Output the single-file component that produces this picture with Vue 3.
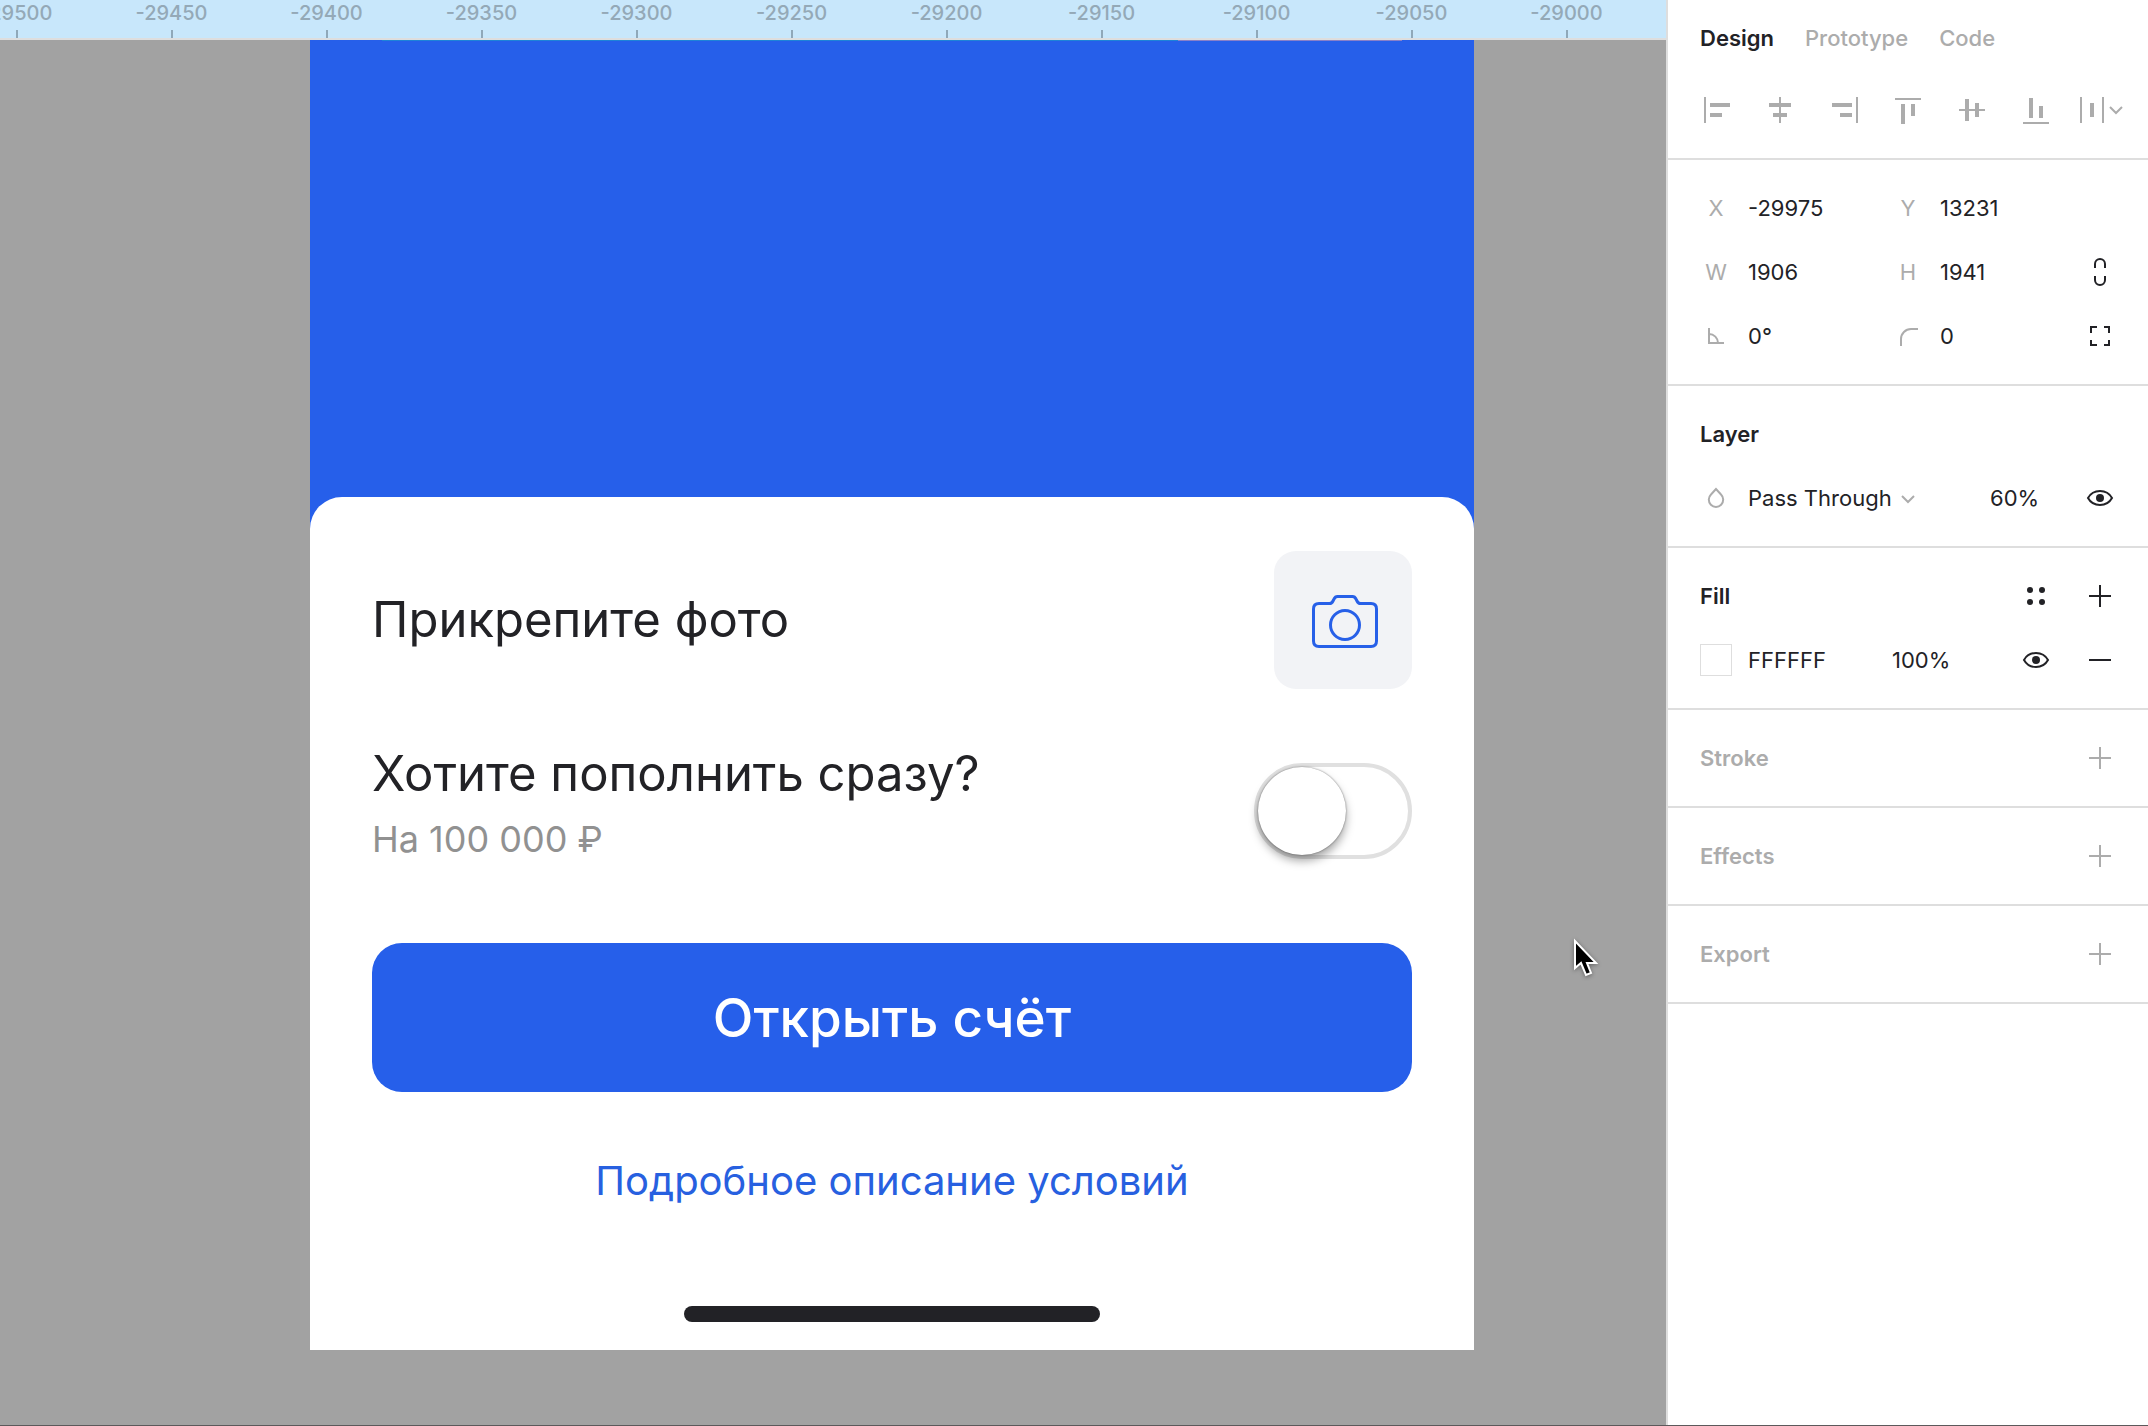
<script setup>
import { ref } from 'vue'

const marks = [-29500, -29450, -29400, -29350, -29300, -29250, -29200, -29150, -29100, -29050, -29000]

const tabs = ['Design', 'Prototype', 'Code']
const activeTab = ref('Design')

const aligns = [
  { name: 'Align left', d: 'M20 19h2v26h-2zM26 25h20v4H26zM26 35h12v4H26z' },
  { name: 'Align horizontal centers', d: 'M31 19h2v26h-2zM21 25h22v4H21zM25 35h14v4H25z' },
  { name: 'Align right', d: 'M44 19h2v26h-2zM20 25h20v4H20zM28 35h12v4H28z' },
  { name: 'Align top', d: 'M19 20h26v2H19zM25 26h4v20h-4zM35 26h4v12h-4z' },
  { name: 'Align vertical centers', d: 'M19 31h26v2H19zM25 21h4v22h-4zM35 25h4v14h-4z' },
  { name: 'Align bottom', d: 'M19 44h26v2H19zM25 20h4v20h-4zM35 28h4v12h-4z' },
]

const frame = ref({ x: '-29975', y: '13231', w: '1906', h: '1941', angle: '0°', radius: '0' })
const blendModes = ['Pass Through', 'Normal', 'Multiply']
const blend = ref('Pass Through')
const opacity = ref('60%')
const fill = ref({ hex: 'FFFFFF', alpha: '100%' })
const emptySections = ['Stroke', 'Effects', 'Export']
const topUp = ref(false)
</script>

<template>
  <div class="editor">
    <main class="workspace">
      <div class="ruler">
        <div class="mark" v-for="mark in marks" :key="mark">{{ mark }}</div>
      </div>
      <div class="canvas">
        <div class="phone">
          <div class="artwork-edge"></div>
          <div class="sheet">
            <div class="line photo-line">
              <h2>Прикрепите фото</h2>
              <button class="camera" aria-label="Прикрепите фото">
                <svg width="66" height="54" viewBox="0 0 66 54" fill="none" stroke="#2760e8" stroke-width="3">
                  <path d="M7 8.500H17.500C19.500 8.500 20.300 7.500 21 6L22 4C22.700 2.500 23.500 1.500 25.500 1.500H40.500C42.500 1.500 43.300 2.500 44 4L45 6C45.700 7.500 46.500 8.500 48.500 8.500H59Q64.500 8.500 64.500 14V46Q64.500 51.500 59 51.500H7Q1.500 51.500 1.500 46V14Q1.500 8.500 7 8.500Z" />
                  <circle cx="33" cy="30" r="14.500" />
                </svg>
              </button>
            </div>
            <div class="line topup-line">
              <label for="topup">
                <span class="question">Хотите пополнить сразу?</span>
                <span class="amount">На 100 000 ₽</span>
              </label>
              <input id="topup" class="switch" type="checkbox" role="switch" v-model="topUp">
            </div>
            <button class="open-btn">Открыть счёт</button>
            <a class="terms" href="#">Подробное описание условий</a>
            <div class="home-bar"></div>
          </div>
        </div>
        <svg class="cursor" width="28" height="40" viewBox="0 0 28 40">
          <path d="M3 3V30L9 25L14 37L19 35L15 25H24Z" fill="#000" stroke="#fff" stroke-width="2" />
        </svg>
      </div>
    </main>

    <aside class="panel">
      <section class="head">
        <nav class="tabs">
          <button v-for="tab in tabs" :key="tab" :class="{ active: tab === activeTab }" @click="activeTab = tab">{{ tab }}</button>
        </nav>
        <div class="aligns">
          <button class="icon-btn muted" v-for="item in aligns" :key="item.name" :aria-label="item.name">
            <svg width="64" height="64" viewBox="0 0 64 64"><path :d="item.d" fill="currentColor" /></svg>
          </button>
          <button class="icon-btn muted" aria-label="Distribute">
            <svg width="64" height="64" viewBox="0 0 64 64">
              <path d="M12 19h2v26h-2zM22 25h4v14h-4zM34 19h2v26h-2z" fill="currentColor" />
              <path d="M42 29l6 6 6-6" fill="none" stroke="currentColor" stroke-width="2" />
            </svg>
          </button>
        </div>
      </section>

      <section>
        <div class="row">
          <div class="field">
            <label for="fx">X</label>
            <input id="fx" v-model="frame.x">
          </div>
          <div class="field">
            <label for="fy">Y</label>
            <input id="fy" v-model="frame.y">
          </div>
        </div>
        <div class="row">
          <div class="field">
            <label for="fw">W</label>
            <input id="fw" v-model="frame.w">
          </div>
          <div class="field">
            <label for="fh">H</label>
            <input id="fh" v-model="frame.h">
          </div>
          <button class="icon-btn" aria-label="Constrain proportions">
            <svg width="64" height="64" viewBox="0 0 64 64" fill="none" stroke="currentColor" stroke-width="2">
              <path d="M27 28V24a5 5 0 0 1 10 0V28M27 36V40a5 5 0 0 0 10 0V36" />
            </svg>
          </button>
        </div>
        <div class="row">
          <div class="field">
            <label for="fa" aria-label="Rotation">
              <svg width="32" height="32" viewBox="0 0 32 32" fill="none" stroke="currentColor" stroke-width="2">
                <path d="M9 8V23H24M9 14a9 9 0 0 1 9 9" />
              </svg>
            </label>
            <input id="fa" v-model="frame.angle">
          </div>
          <div class="field">
            <label for="fr" aria-label="Corner radius">
              <svg width="32" height="32" viewBox="0 0 32 32" fill="none" stroke="currentColor" stroke-width="2">
                <path d="M9 26V19A10 10 0 0 1 19 9H26" />
              </svg>
            </label>
            <input id="fr" v-model="frame.radius">
          </div>
          <button class="icon-btn" aria-label="Independent corners">
            <svg width="64" height="64" viewBox="0 0 64 64" fill="none" stroke="currentColor" stroke-width="2">
              <path d="M23 29V23H29M36 23H41V29M41 36V41H36M29 41H23V36" />
            </svg>
          </button>
        </div>
      </section>

      <section>
        <div class="row"><h3>Layer</h3></div>
        <div class="row">
          <div class="field blend">
            <label for="blend" aria-label="Blend mode">
              <svg width="32" height="32" viewBox="0 0 32 32" fill="none" stroke="currentColor" stroke-width="2">
                <path d="M16 7L11 12.500a7.200 7.200 0 1 0 10 0Z" />
              </svg>
            </label>
            <select id="blend" v-model="blend">
              <option v-for="mode in blendModes" :key="mode">{{ mode }}</option>
            </select>
            <svg class="chevron" width="16" height="16" viewBox="0 0 16 16" fill="none" stroke="currentColor" stroke-width="2">
              <path d="M2 6l6 6 6-6" />
            </svg>
          </div>
          <input class="opacity" aria-label="Layer opacity" v-model="opacity">
          <button class="icon-btn" aria-label="Toggle layer visibility">
            <svg width="64" height="64" viewBox="0 0 64 64">
              <path d="M20 32C22.500 27.500 27 25 32 25S41.500 27.500 44 32C41.500 36.500 37 39 32 39S22.500 36.500 20 32Z" fill="none" stroke="currentColor" stroke-width="2" />
              <circle cx="32" cy="32" r="4" fill="currentColor" />
            </svg>
          </button>
        </div>
      </section>

      <section>
        <div class="row">
          <h3>Fill</h3>
          <button class="icon-btn" aria-label="Styles">
            <svg width="64" height="64" viewBox="0 0 64 64" fill="currentColor">
              <circle cx="26" cy="26" r="3" /><circle cx="38" cy="26" r="3" />
              <circle cx="26" cy="38" r="3" /><circle cx="38" cy="38" r="3" />
            </svg>
          </button>
          <button class="icon-btn" aria-label="Add fill">
            <svg width="64" height="64" viewBox="0 0 64 64"><path d="M31 21h2v10h10v2H33v10h-2V33H21v-2h10z" fill="currentColor" /></svg>
          </button>
        </div>
        <div class="row">
          <button class="swatch" aria-label="Fill color"></button>
          <input class="hex" aria-label="Fill hex" v-model="fill.hex">
          <input class="alpha" aria-label="Fill opacity" v-model="fill.alpha">
          <button class="icon-btn" aria-label="Toggle fill visibility">
            <svg width="64" height="64" viewBox="0 0 64 64">
              <path d="M20 32C22.500 27.500 27 25 32 25S41.500 27.500 44 32C41.500 36.500 37 39 32 39S22.500 36.500 20 32Z" fill="none" stroke="currentColor" stroke-width="2" />
              <circle cx="32" cy="32" r="4" fill="currentColor" />
            </svg>
          </button>
          <button class="icon-btn" aria-label="Remove fill">
            <svg width="64" height="64" viewBox="0 0 64 64"><path d="M21 31h22v2H21z" fill="currentColor" /></svg>
          </button>
        </div>
      </section>

      <section v-for="name in emptySections" :key="name">
        <div class="row muted">
          <h3>{{ name }}</h3>
          <button class="icon-btn muted" :aria-label="'Add ' + name">
            <svg width="64" height="64" viewBox="0 0 64 64"><path d="M31 21h2v10h10v2H33v10h-2V33H21v-2h10z" fill="currentColor" /></svg>
          </button>
        </div>
      </section>
    </aside>
  </div>
</template>

<style>
body {
  margin: 0;
}
</style>

<style scoped>
.editor {
  display: flex;
  min-height: 100vh;
  box-sizing: border-box;
  border-bottom: 1px solid #5c595b;
  font-family: Inter, "Liberation Sans", sans-serif;
  font-size: 22px;
  color: #222226;
  background: #fff;
}
button,
input,
select {
  margin: 0;
  padding: 0;
  border: 0;
  background: none;
  font: inherit;
  color: inherit;
  min-width: 0;
}
button {
  cursor: pointer;
}
h2,
h3 {
  margin: 0;
}
svg {
  display: block;
}

/* canvas */
.workspace {
  flex: 1;
  min-width: 0;
  display: flex;
  flex-direction: column;
  overflow: hidden;
}
.ruler {
  display: flex;
  height: 38px;
  background: #c8e7fb;
  border-bottom: 2px solid #dedede;
}
.mark {
  flex: none;
  display: flex;
  flex-direction: column;
  align-items: center;
  justify-content: space-between;
  width: 155px;
  font-size: 20px;
  font-weight: 500;
  line-height: 26px;
  color: #94a9b7;
}
.mark:first-child {
  margin-left: -61px;
}
.mark::after {
  content: "";
  width: 2px;
  height: 8px;
  background: #8fa8b9;
}
.canvas {
  position: relative;
  flex: 1;
  display: flex;
  align-items: flex-start;
  padding: 0 192px 0 310px;
  background: #a2a2a2;
}
.phone {
  flex: 1;
  min-width: 0;
  background: #265fea;
}
.artwork-edge {
  height: 1px;
  margin: 0 72px 456px;
  background: linear-gradient(90deg, #1d83d8 78%, #8a80c8 78%);
}
.sheet {
  display: flex;
  flex-direction: column;
  padding: 54px 62px 28px;
  border-radius: 32px 32px 0 0;
  background: #fff;
}
.line {
  display: flex;
  align-items: center;
  justify-content: space-between;
}
h2,
.question {
  font-size: 49px;
  line-height: 64px;
  font-weight: 400;
}
.camera {
  display: flex;
  align-items: center;
  justify-content: center;
  width: 138px;
  height: 138px;
  padding: 4px 0 0 4px;
  border-radius: 22px;
  background: #f2f3f6;
}
.topup-line {
  margin-top: 53px;
}
.topup-line label {
  display: flex;
  flex-direction: column;
}
.amount {
  font-size: 36px;
  line-height: 66px;
  color: #919191;
}
.switch {
  appearance: none;
  display: flex;
  box-sizing: border-box;
  width: 158px;
  height: 96px;
  margin-top: 8px;
  border: 4px solid #e0e0e0;
  border-radius: 48px;
  cursor: pointer;
}
.switch::before {
  content: "";
  width: 88px;
  height: 88px;
  border-radius: 50%;
  background: #fff;
  box-shadow: 0 0 2px rgba(0, 0, 0, .5), 0 6px 10px rgba(0, 0, 0, .35);
}
.switch:checked {
  justify-content: flex-end;
  background: #265fea;
}
.open-btn {
  height: 149px;
  margin-top: 71px;
  border-radius: 30px;
  background: #265fea;
  color: #fff;
  font-size: 53px;
  font-weight: 500;
}
.terms {
  align-self: center;
  margin-top: 64px;
  font-size: 40px;
  line-height: 50px;
  color: #2760e0;
  text-decoration: none;
}
.home-bar {
  align-self: center;
  width: 40%;
  height: 16px;
  margin-top: 100px;
  border-radius: 8px;
  background: #222226;
}
.cursor {
  position: absolute;
  top: 898px;
  left: 1572px;
  filter: drop-shadow(0 1px 2px rgba(0, 0, 0, .4));
}

/* inspector */
.panel {
  flex: none;
  width: 480px;
  border-left: 2px solid #dedede;
}
section {
  padding: 16px 16px 16px 32px;
  border-bottom: 2px solid #dedede;
}
.head {
  padding: 0 16px 16px;
}
.tabs {
  display: flex;
  gap: 31px;
  height: 76px;
  padding: 0 16px 2px;
}
.tabs button {
  font-weight: 500;
  color: #acacac;
}
.tabs .active {
  font-weight: 600;
  color: #222226;
}
.aligns {
  display: flex;
}
.row {
  display: flex;
  align-items: center;
  height: 64px;
}
.icon-btn {
  flex: none;
  width: 64px;
  height: 64px;
}
.muted {
  color: #acacac;
}
.field {
  display: flex;
  align-items: center;
  gap: 16px;
  width: 192px;
}
.field + .field {
  width: 176px;
}
.field label,
.chevron {
  flex: none;
  color: #acacac;
}
.field label {
  width: 32px;
  text-align: center;
}
.field input {
  flex: 1;
}
.blend {
  width: 290px;
}
.blend select {
  appearance: none;
}
.blend .chevron {
  margin-left: -8px;
}
.opacity {
  flex: 1;
}
h3 {
  flex: 1;
  font-size: 22px;
  font-weight: 600;
}
.swatch {
  box-sizing: border-box;
  width: 32px;
  height: 32px;
  margin-right: 16px;
  border: 1px solid #dedede;
}
.hex {
  width: 144px;
}
.alpha {
  flex: 1;
}
</style>
